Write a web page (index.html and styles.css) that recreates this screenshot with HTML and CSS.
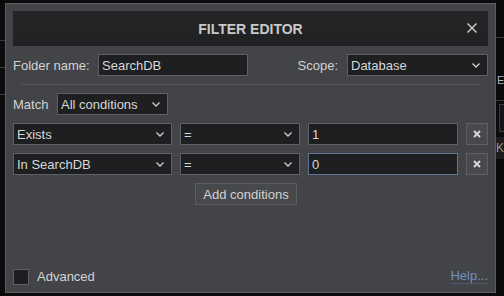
FILE: index.html
```html
<!DOCTYPE html>
<html lang="en">
<head>
    <meta charset="UTF-8">
    <title>Filter Editor</title>
    <link rel="stylesheet" href="styles.css">
</head>
<body>
    <!-- Bits of the app window that show round the dialog -->
    <div class="backdrop">
        <div class="bg-line left-a"></div>
        <div class="bg-line left-b"></div>
        <div class="bg-line left-c"></div>
        <div class="bg-line right-a"></div>
        <div class="bg-line right-b"></div>
        <div class="bg-tab"><span class="bg-mark"></span>E</div>
        <div class="bg-box"></div>
        <div class="bg-cell">Ke</div>
    </div>

    <div class="dialog">
        <div class="dialog-header">
            <h2>FILTER EDITOR</h2>
            <span class="close">
                <svg width="10" height="10" viewBox="0 0 10 10"><path d="M0.5 0.5 L9.5 9.5 M9.5 0.5 L0.5 9.5" stroke="#cfcfcf" stroke-width="1.4" fill="none"/></svg>
            </span>
        </div>

        <div class="dialog-body">
            <div class="row folder-row">
                <span class="label folder-label">Folder name:</span>
                <div class="field folder-field">SearchDB</div>
                <span class="label scope-label">Scope:</span>
                <div class="field select scope-select">
                    <span>Database</span>
                    <svg class="chev" width="8" height="5" viewBox="0 0 8 5"><path d="M0.5 0.5 L4 4 L7.5 0.5" stroke="#d0d0d0" stroke-width="1.3" fill="none"/></svg>
                </div>
            </div>

            <div class="sep"></div>

            <div class="row match-row">
                <span class="label match-label">Match</span>
                <div class="field select match-select">
                    <span>All conditions</span>
                    <svg class="chev" width="8" height="5" viewBox="0 0 8 5"><path d="M0.5 0.5 L4 4 L7.5 0.5" stroke="#d0d0d0" stroke-width="1.3" fill="none"/></svg>
                </div>
            </div>

            <div class="row cond-row">
                <div class="field select cond-field">
                    <span>Exists</span>
                    <svg class="chev" width="8" height="5" viewBox="0 0 8 5"><path d="M0.5 0.5 L4 4 L7.5 0.5" stroke="#d0d0d0" stroke-width="1.3" fill="none"/></svg>
                </div>
                <div class="field select op-field">
                    <span>=</span>
                    <svg class="chev" width="8" height="5" viewBox="0 0 8 5"><path d="M0.5 0.5 L4 4 L7.5 0.5" stroke="#d0d0d0" stroke-width="1.3" fill="none"/></svg>
                </div>
                <div class="field value-field">1</div>
                <div class="remove">
                    <svg width="8" height="8" viewBox="0 0 8 8"><path d="M1 1 L7 7 M7 1 L1 7" stroke="#d6d6d6" stroke-width="2" fill="none"/></svg>
                </div>
            </div>

            <div class="row cond-row">
                <div class="field select cond-field">
                    <span>In SearchDB</span>
                    <svg class="chev" width="8" height="5" viewBox="0 0 8 5"><path d="M0.5 0.5 L4 4 L7.5 0.5" stroke="#d0d0d0" stroke-width="1.3" fill="none"/></svg>
                </div>
                <div class="field select op-field">
                    <span>=</span>
                    <svg class="chev" width="8" height="5" viewBox="0 0 8 5"><path d="M0.5 0.5 L4 4 L7.5 0.5" stroke="#d0d0d0" stroke-width="1.3" fill="none"/></svg>
                </div>
                <div class="field value-field focused">0</div>
                <div class="remove">
                    <svg width="8" height="8" viewBox="0 0 8 8"><path d="M1 1 L7 7 M7 1 L1 7" stroke="#d6d6d6" stroke-width="2" fill="none"/></svg>
                </div>
            </div>

            <div class="row add-row">
                <div class="add-btn">Add conditions</div>
            </div>
        </div>

        <div class="dialog-footer">
            <span class="checkbox"></span>
            <span class="label adv-label">Advanced</span>
            <span class="help">Help...</span>
        </div>
    </div>
</body>
</html>
```

FILE: styles.css
```css
/* Dark dialog over a dark app window. Flexbox for every row. */
body {
    margin: 0;
    width: 504px;
    height: 296px;
    background: #0b0b0b;
    font-family: "Liberation Sans", Arial, sans-serif;
    font-size: 13px;
    color: #d2d2d2;
    overflow: hidden;
    position: relative;
}

/* app behind the dialog, only a few pixels show */
.backdrop .bg-line {
    position: absolute;
    height: 1px;
    background: #3a3a3c;
}
.left-a { left: 0; width: 5px; top: 40px; }
.left-b { left: 0; width: 5px; top: 67px; }
.left-c { left: 0; width: 5px; top: 94px; }
.right-a { left: 496px; width: 8px; top: 37px; }
.right-b { left: 496px; width: 8px; top: 100px; }
.bg-tab {
    position: absolute;
    left: 496px;
    top: 73px;
    height: 14px;
    width: 8px;
    display: flex;
    align-items: center;
    font-size: 11px;
    color: #9fb7c9;
}
.bg-mark {
    width: 3px;
    height: 14px;
    background: #1d5f9e;
    margin-right: 1px;
}
.bg-box {
    position: absolute;
    left: 499px;
    top: 104px;
    width: 8px;
    height: 26px;
    border: 1px solid #3c3c3e;
    background: #16161a;
}
.bg-cell {
    position: absolute;
    left: 496px;
    top: 137px;
    width: 8px;
    height: 22px;
    background: #1d1d1f;
    color: #9a9a9a;
    font-size: 12px;
    line-height: 22px;
    overflow: hidden;
}

.dialog {
    position: relative; /* sits over the backdrop */
    margin: 3px 0 0 5px;
    width: 489px;
    height: 288px;
    background: #434448;
    border: 1px solid #5b5c60;
    display: flex;
    flex-direction: column;
}

.dialog-header {
    margin: 7px 7px 0 7px;
    height: 35px;
    background: linear-gradient(#252628, #1f2022);
    display: flex;
    align-items: center;
    justify-content: center;
    position: relative;
}
.dialog-header h2 {
    margin: 0;
    font-size: 14px;
    font-weight: bold;
    color: #c9c9c9;
}
.close {
    position: absolute;
    right: 11px;
    top: 12px;
    display: flex;
}

.dialog-body {
    display: flex;
    flex-direction: column;
    gap: 8px;
    padding: 8px 7px 0 7px;
}
.row {
    display: flex;
    align-items: center;
    height: 22px;
}

.field {
    box-sizing: border-box;
    height: 22px;
    background: #1e1f21;
    border: 1px solid #5f6064;
    display: flex;
    align-items: center;
    padding: 0 3px;
    color: #d8d8d8;
}
.select {
    justify-content: space-between;
    padding-right: 7px;
}
.chev {
    display: block;
}
.focused {
    border-color: #5d7597;
}

.folder-label { width: 85px; }
.folder-field { width: 150px; }
.scope-label { margin-left: auto; margin-right: 9px; }
.scope-select { width: 141px; }

.sep {
    height: 1px;
    background: #55565a;
    margin: 0 8px;
}

.match-label { width: 44px; }
.match-select { width: 111px; }

.cond-row { gap: 8px; }
.cond-field { width: 159px; }
.op-field { width: 120px; }
.value-field { width: 150px; }
.remove {
    box-sizing: border-box;
    width: 22px;
    height: 22px;
    background: #48494d;
    border: 1px solid #5f6064;
    display: flex;
    align-items: center;
    justify-content: center;
}

.add-btn {
    box-sizing: border-box;
    margin-left: 182px;
    width: 102px;
    height: 22px;
    background: #48494d;
    border: 1px solid #5d5e62;
    display: flex;
    align-items: center;
    justify-content: center;
    color: #d2d2d2;
}

.dialog-footer {
    margin-top: auto;
    padding: 0 7px 7px 7px;
    height: 17px;
    display: flex;
    align-items: center;
}
.checkbox {
    box-sizing: border-box;
    width: 16px;
    height: 16px;
    background: #1e1f21;
    border: 1px solid #5f6064;
    margin-right: 8px;
}
.help {
    margin-left: auto;
    color: #6e91bd;
    border-bottom: 1px solid #4a5b70;
    line-height: 14px;
}
```
